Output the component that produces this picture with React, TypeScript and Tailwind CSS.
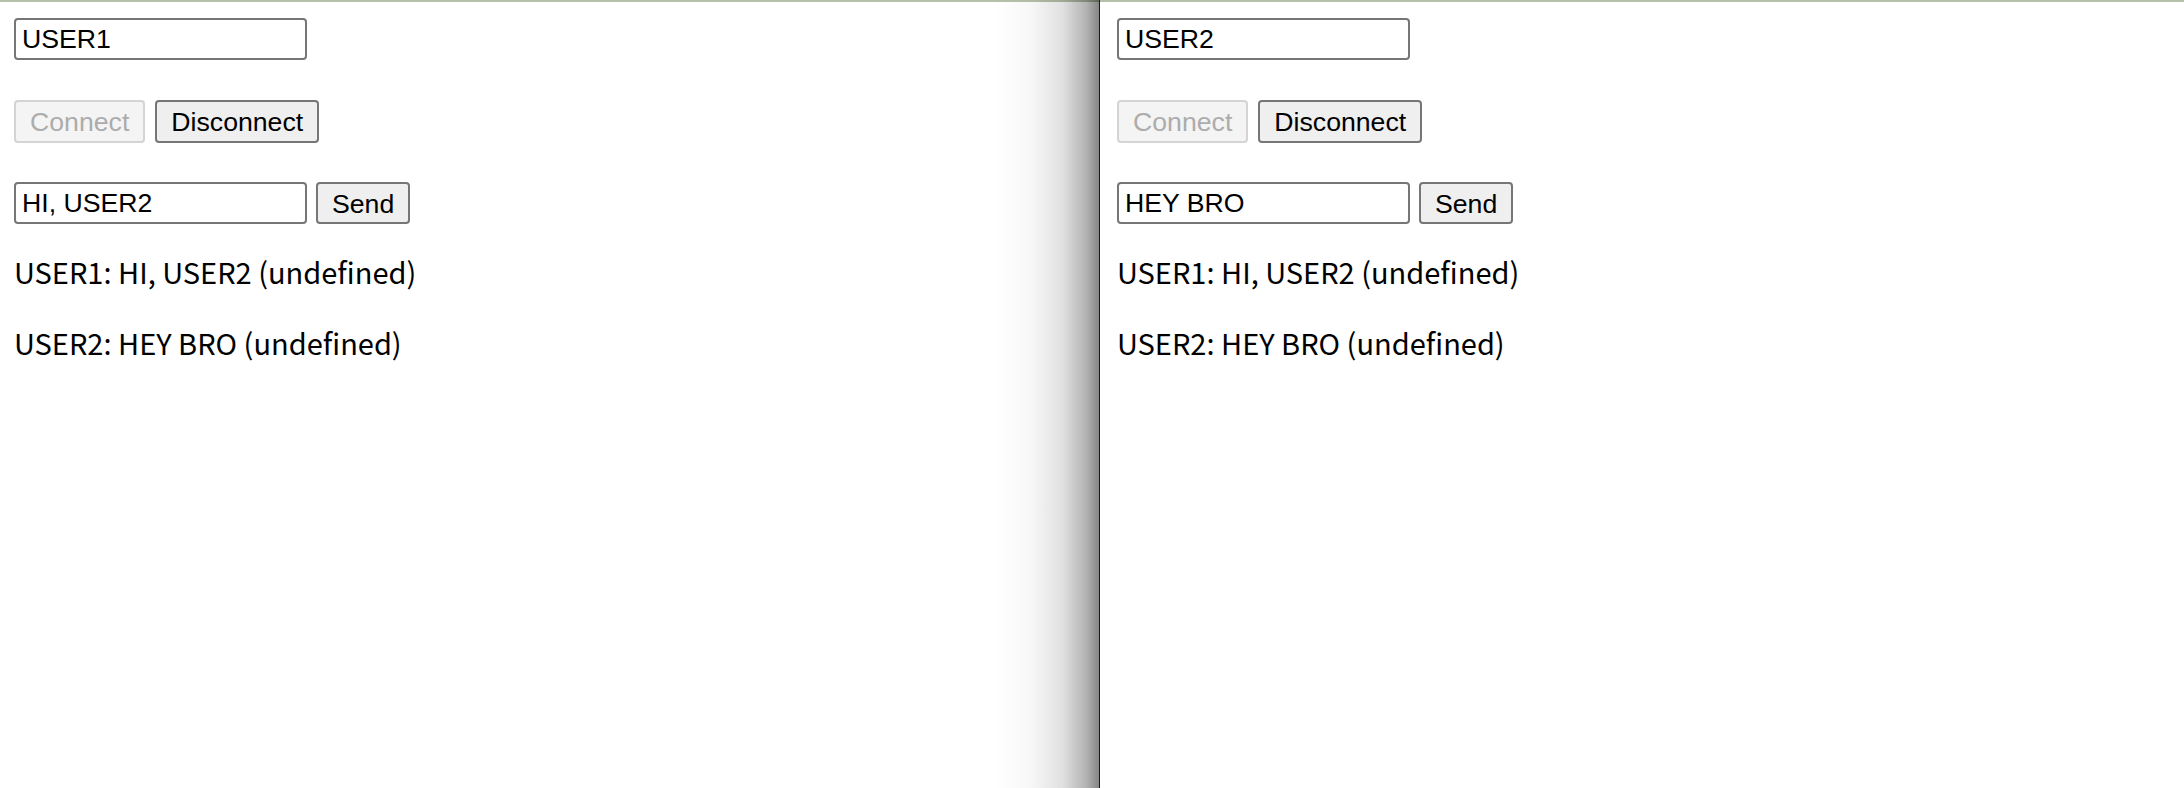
import React from "react";

const ctrlFont = { fontFamily: '"Liberation Sans", Arial, sans-serif' };

function Panel({ name, draft }: { name: string; draft: string }) {
  return (
    <div className="flex flex-col">
      <div className="flex">
        <input
          readOnly
          value={name}
          style={ctrlFont}
          className="h-[42px] w-[293px] rounded-[4px] border-2 border-[#767676] bg-white pl-[6px] text-[26.67px] text-black outline-none"
        />
      </div>
      <div className="mt-[40px] flex gap-[10px]">
        <button
          disabled
          style={ctrlFont}
          className="h-[43px] rounded-[4px] border-2 border-[#d4d4d4] bg-[#f4f4f4] px-[14px] text-[26.67px] text-[#acacac]"
        >
          Connect
        </button>
        <button
          style={ctrlFont}
          className="h-[43px] rounded-[4px] border-2 border-[#767676] bg-[#efefef] px-[14px] text-[26.67px] text-black"
        >
          Disconnect
        </button>
      </div>
      <div className="mt-[39px] flex gap-[9px]">
        <input
          readOnly
          value={draft}
          style={ctrlFont}
          className="h-[42px] w-[293px] rounded-[4px] border-2 border-[#767676] bg-white pl-[6px] text-[26.67px] text-black outline-none"
        />
        <button
          style={ctrlFont}
          className="h-[42px] rounded-[4px] border-2 border-[#767676] bg-[#efefef] px-[14px] text-[26.67px] text-black"
        >
          Send
        </button>
      </div>
      <div
        className="mt-[27px] flex flex-col gap-[31px] text-[29px] leading-[40px] text-black"
        style={{ fontFamily: '"Noto Sans CJK KR", "Noto Sans", sans-serif' }}
      >
        <p>USER1: HI, USER2 (undefined)</p>
        <p>USER2: HEY BRO (undefined)</p>
      </div>
    </div>
  );
}

export default function App() {
  return (
    <div className="flex h-[788px] w-full overflow-hidden bg-white">
      <div className="relative flex h-full w-[1099px] shrink-0 flex-col">
        <div className="h-[2px] w-full bg-[#b7c0a9]" />
        <div className="pl-[14px] pt-[16px]">
          <Panel name="USER1" draft="HI, USER2" />
        </div>
        <div className="pointer-events-none absolute inset-y-0 right-0 w-[104px] bg-[linear-gradient(to_right,rgba(0,0,0,0)_0%,rgba(0,0,0,0.03)_35%,rgba(0,0,0,0.12)_65%,rgba(0,0,0,0.3)_88%,rgba(0,0,0,0.48)_100%)]" />
      </div>
      <div className="h-full w-[1px] shrink-0 bg-[#1a1a1a]" />
      <div className="flex h-full flex-1 flex-col">
        <div className="h-[2px] w-full bg-[#b7c0a9]" />
        <div className="pl-[17px] pt-[16px]">
          <Panel name="USER2" draft="HEY BRO" />
        </div>
      </div>
    </div>
  );
}
